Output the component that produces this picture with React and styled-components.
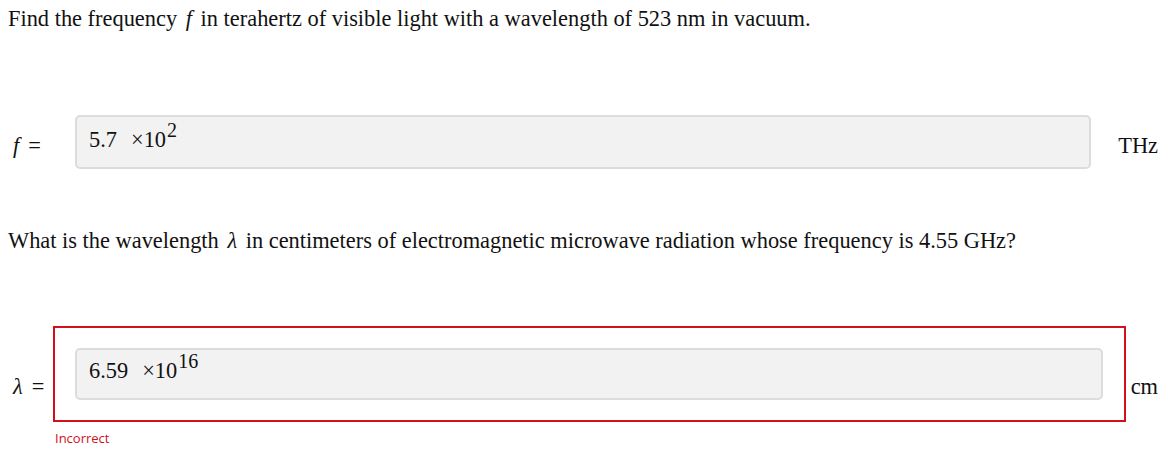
import React from 'react';
import styled, { createGlobalStyle } from 'styled-components';

const GlobalStyle = createGlobalStyle`
  html, body {
    margin: 0;
    padding: 0;
    background: #fff;
  }
  body {
    font-family: 'Liberation Serif', 'Times New Roman', serif;
    color: #111;
  }
`;

const Page = styled.div`
  padding: 6px 8px 0 8px;
  width: 1168px;
  box-sizing: border-box;
`;

const Question = styled.p`
  margin: 0 0 ${(p) => p.gap}px 0;
  font-size: 22.4px;
  line-height: 26px;
  white-space: nowrap;
`;

const Var = styled.i`
  font-family: 'Liberation Serif', 'DejaVu Serif', serif;
  font-style: italic;
  margin: 0 ${(p) => (p.inline ? 3 : 0)}px;
`;

const Row = styled.div`
  display: flex;
  align-items: flex-start;
  margin-bottom: ${(p) => p.gap || 0}px;
`;

const Label = styled.div`
  flex: 0 0 ${(p) => p.width}px;
  box-sizing: border-box;
  padding-left: 5px;
  margin-top: ${(p) => p.top}px;
  font-size: 22.4px;
  line-height: 26px;
  white-space: nowrap;
`;

const Equals = styled.span`
  margin-left: 9px;
`;

const Unit = styled.div`
  flex: 0 0 ${(p) => p.width}px;
  margin-top: ${(p) => p.top}px;
  text-align: right;
  font-size: 22.4px;
  line-height: 26px;
  padding-right: 2px;
  box-sizing: border-box;
`;

const FieldWrap = styled.div`
  flex: 1;
  display: flex;
  flex-direction: column;
`;

const ErrorBox = styled.div`
  border: 2px solid #d0111b;
  padding: 20px 21px 20px 20px;
`;

const Input = styled.div`
  box-sizing: border-box;
  height: ${(p) => p.height}px;
  background: #f2f2f2;
  border: 2px solid #dcdcdc;
  border-radius: 5px;
  padding: ${(p) => p.pad}px 12px 0 12px;
  font-size: 22.4px;
  line-height: 26px;
  white-space: nowrap;
`;

const Times = styled.span`
  margin-left: 14px;
`;

const Exp = styled.sup`
  font-size: 20px;
  line-height: 0;
  vertical-align: 10px;
  margin-left: 1px;
`;

const Feedback = styled.div`
  margin-top: 7px;
  padding-left: 2px;
  font-family: 'Open Sans', 'Noto Sans', sans-serif;
  font-size: 13px;
  line-height: 18px;
  color: #d0111b;
`;

const Value = ({ mantissa, exponent }) => (
  <>
    {mantissa}
    <Times>×10</Times>
    <Exp>{exponent}</Exp>
  </>
);

export default function App() {
  return (
    <Page>
      <GlobalStyle />
      <Question gap={83}>
        Find the frequency <Var inline>f</Var> in terahertz of visible light
        with a wavelength of 523 nm in vacuum.
      </Question>

      <Row gap={59}>
        <Label width={67} top={18}>
          <Var>f</Var>
          <Equals>=</Equals>
        </Label>
        <FieldWrap>
          <Input height={54} pad={10}>
            <Value mantissa="5.7" exponent="2" />
          </Input>
        </FieldWrap>
        <Unit width={69} top={18}>
          THz
        </Unit>
      </Row>

      <Question gap={72}>
        What is the wavelength <Var inline>λ</Var> in centimeters of
        electromagnetic microwave radiation whose frequency is 4.55 GHz?
      </Question>

      <Row>
        <Label width={45} top={48}>
          <Var>λ</Var>
          <Equals>=</Equals>
        </Label>
        <FieldWrap>
          <ErrorBox>
            <Input height={52} pad={8}>
              <Value mantissa="6.59" exponent="16" />
            </Input>
          </ErrorBox>
          <Feedback>Incorrect</Feedback>
        </FieldWrap>
        <Unit width={34} top={48}>
          cm
        </Unit>
      </Row>
    </Page>
  );
}
